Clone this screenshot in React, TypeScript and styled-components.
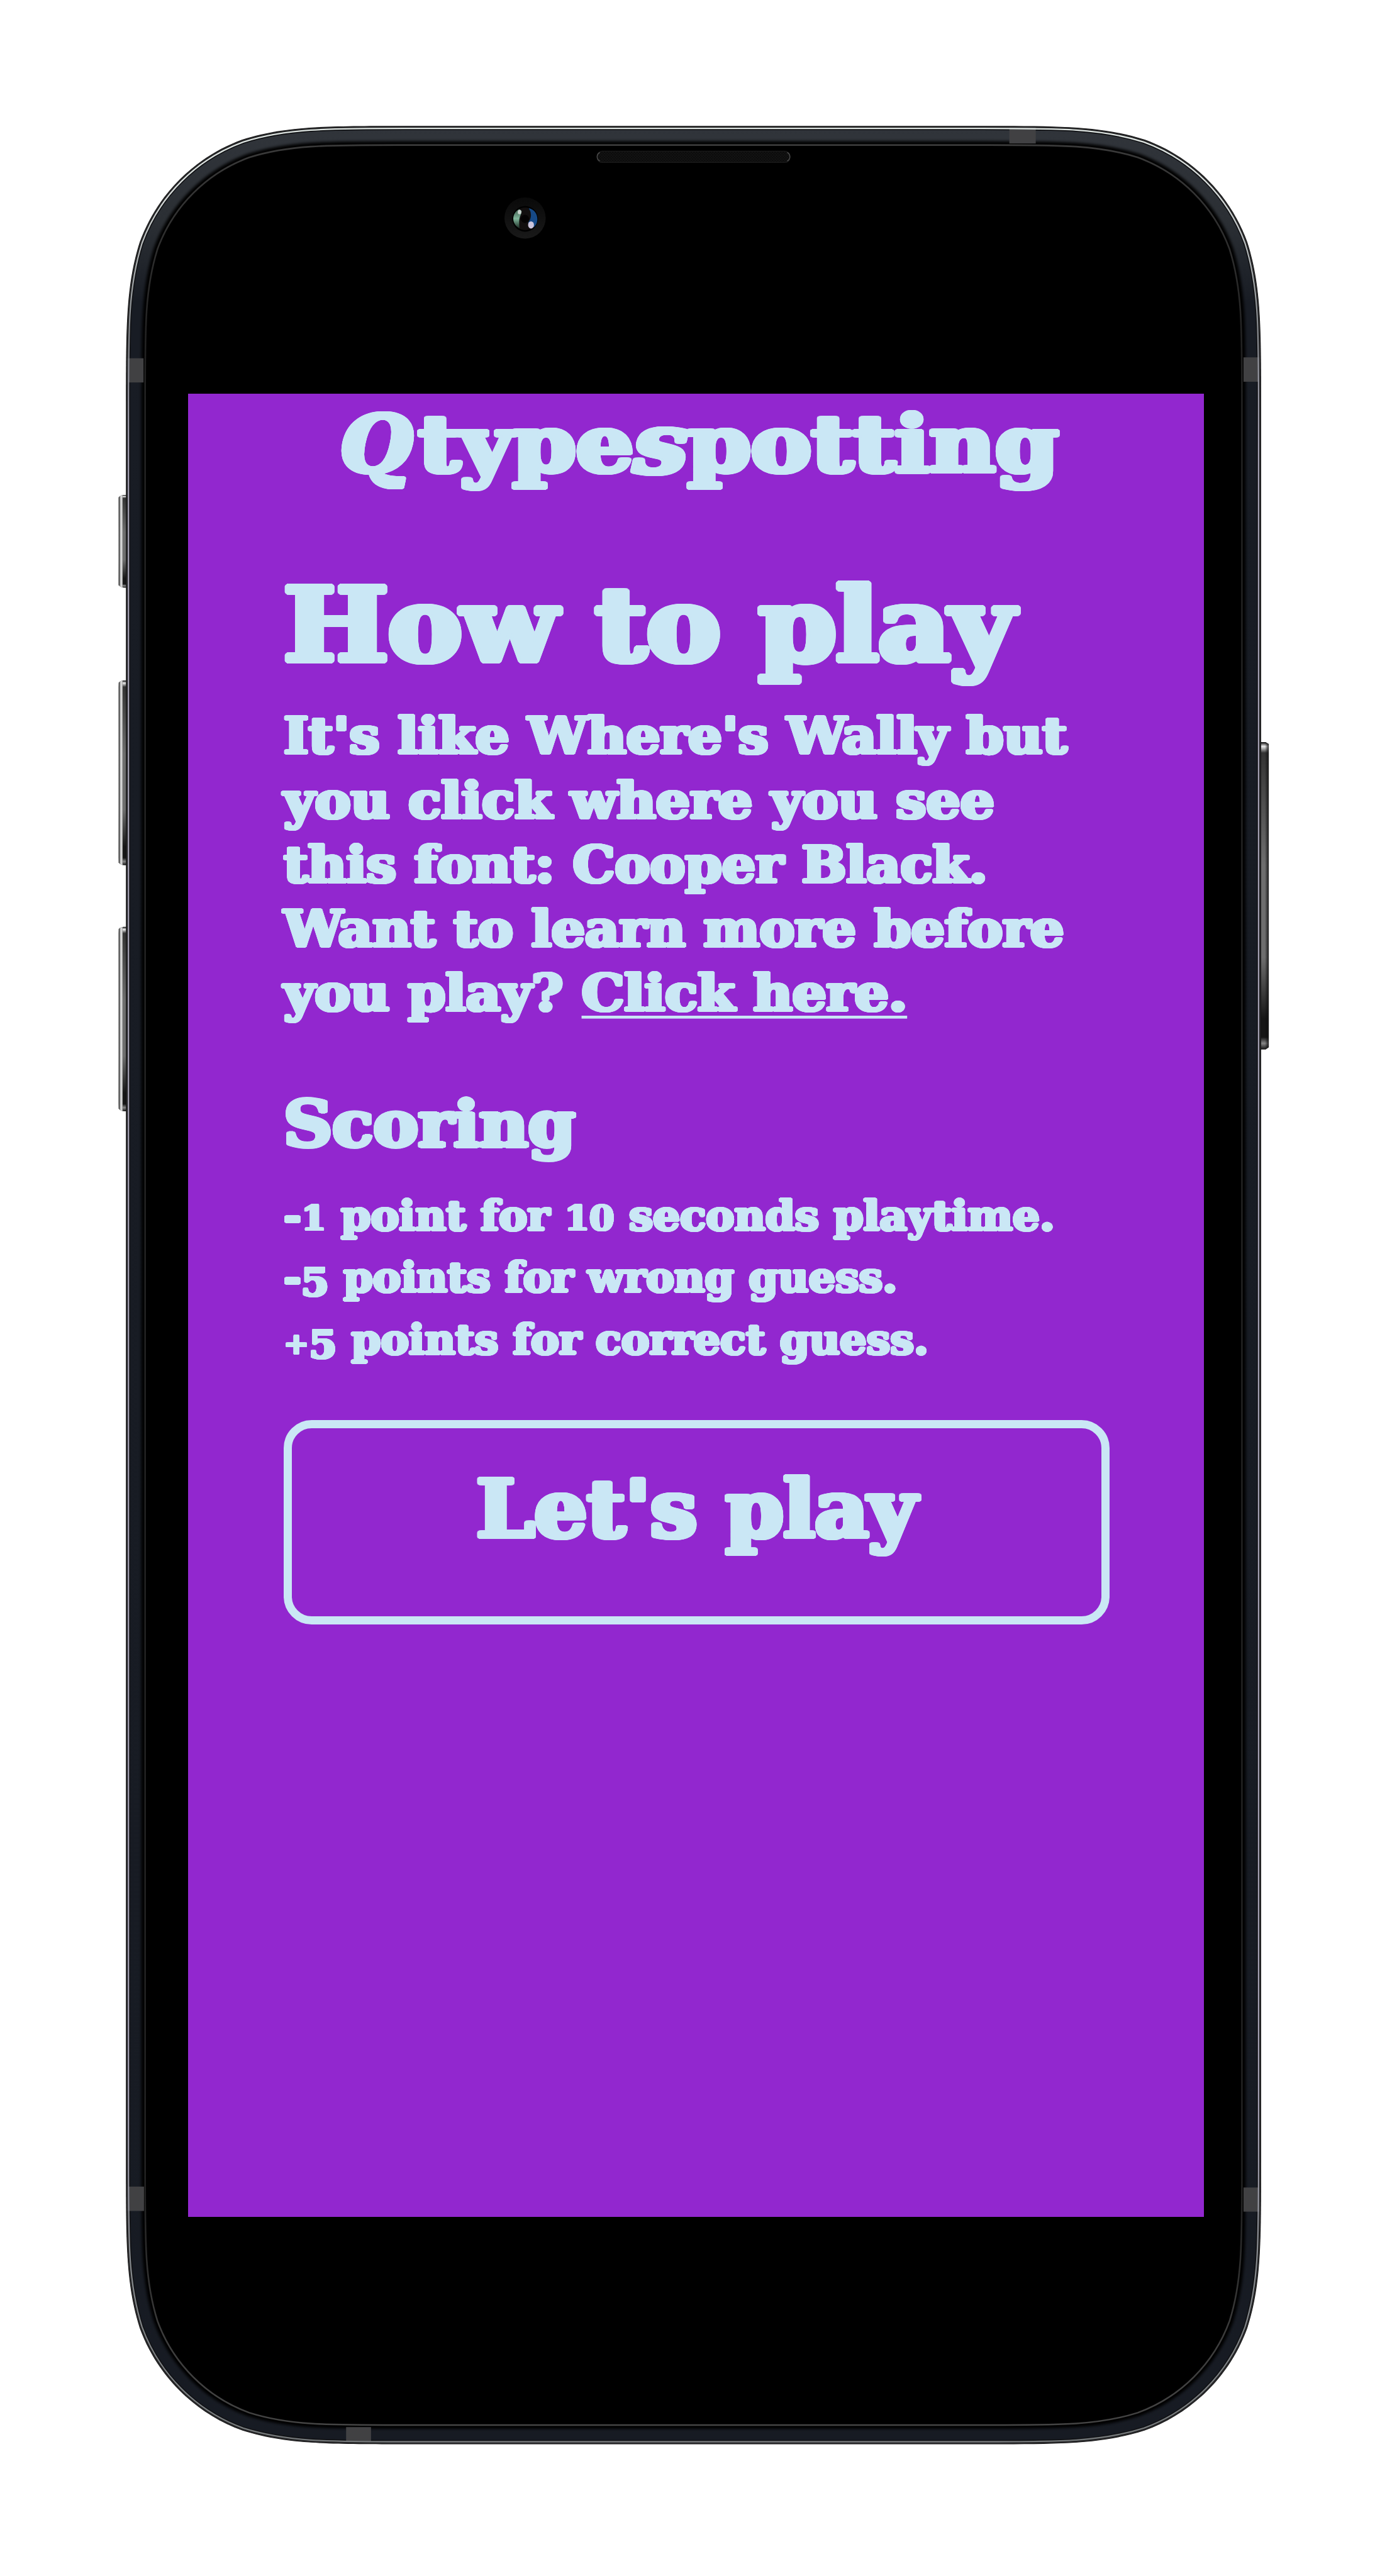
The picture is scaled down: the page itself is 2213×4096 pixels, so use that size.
import React from 'react';
import styled, { createGlobalStyle } from 'styled-components';

/* Every length is given in artboard units (3084 x 5709) and converted here. */
const SCALE = 0.7175;
const u = (n: number) => `${(n * SCALE).toFixed(2)}px`;

const INK = '#cae7f5';
const PURPLE = '#9227cf';

/* Spreads the glyph outline so that stems get fat and corners turn round. */
const plump = Array.from({ length: 24 }, (_, i) => {
  const a = (i * Math.PI) / 12;
  return `${(Math.cos(a) * 0.037).toFixed(4)}em ${(Math.sin(a) * 0.025).toFixed(4)}em 0 ${INK}`;
}).join(', ');

const GlobalStyle = createGlobalStyle`
  *, *::before, *::after { box-sizing: border-box; }
  body { margin: 0; background: #fff; }
`;

const Stage = styled.main`
  position: relative;
  width: 2213px;
  height: 4096px;
  padding: ${u(872)} 0 0 ${u(417.3)};
  overflow: hidden;
  background: #fff;
`;

const Bezel = styled.svg`
  position: absolute;
  inset: 0;
  width: 100%;
  height: 100%;
`;

const Screen = styled.div`
  position: relative;
  display: flex;
  flex-direction: column;
  width: ${u(2250)};
  height: ${u(4041)};
  background: ${PURPLE};
  color: ${INK};
  font-family: 'DejaVu Serif', serif;
  font-weight: 700;

  & * {
    text-shadow: ${plump};
  }
`;

const Logo = styled.header`
  display: flex;
  padding: ${u(11)} 0 0 ${u(337)};
  font-size: ${u(176)};
  line-height: ${u(200)};
`;

const LogoInitial = styled.span`
  width: ${u(173)};
  font-style: italic;
  transform: scaleX(1.04);
  transform-origin: 0 50%;
`;

const LogoSwash = styled.span`
  font-size: 1.06em;
  font-style: italic;
  line-height: 0;
  vertical-align: -0.015em;
`;

const Content = styled.section`
  display: flex;
  flex-direction: column;
  padding: 0 ${u(209)} 0 ${u(210.7)};
`;

const Line = styled.span<{ $stretch: number }>`
  display: block;
  width: max-content;
  white-space: pre;
  transform: scaleX(${(p) => p.$stretch});
  transform-origin: 0 50%;
`;

const Heading = styled.h1`
  margin: ${u(166.6)} 0 0;
  font-size: ${u(226)};
  line-height: ${u(271)};
`;

const Intro = styled.p`
  margin: ${u(39.4)} 0 0;
  font-size: ${u(113)};
  line-height: ${u(142.5)};
`;

const Link = styled.a`
  color: inherit;
  text-decoration: none;
  background: linear-gradient(${INK}, ${INK}) 0 ${u(117)} / 100% ${u(6.5)} no-repeat;
`;

const Subheading = styled.h2`
  margin: ${u(134.7)} 0 0;
  font-size: ${u(141)};
  line-height: ${u(170)};
`;

const Rules = styled.ul`
  margin: ${u(48)} 0 0;
  padding: 0;
  list-style: none;
  font-size: ${u(90)};
  line-height: ${u(137.3)};
`;

const Figure = styled.span<{ $size: number; $drop?: number }>`
  font-size: ${(p) => p.$size}em;
  line-height: 0;
  vertical-align: ${(p) => -(p.$drop ?? 0)}em;
`;

const PlayButton = styled.button`
  display: flex;
  justify-content: center;
  align-items: flex-start;
  width: ${u(1830)};
  height: ${u(452)};
  margin: ${u(110.6)} 0 0;
  padding: ${u(72)} 0 0;
  border: ${u(18.5)} solid ${INK};
  border-radius: ${u(62)};
  background: none;
  color: inherit;
  font: inherit;
  font-size: ${u(178)};
  line-height: ${u(214)};
`;

const PlayLabel = styled(Line)`
  transform-origin: 50% 50%;
`;

/* Continuous-curvature rounded rectangle, inset from the phone's outer edge. */
function shell(inset: number) {
  const l = 279 + inset;
  const t = 279 + inset;
  const r = 2794 - inset;
  const b = 5417 - inset;
  const k = 408 - inset;
  const corner = [
    [1.0885, 0, 0.8684, 0, 0.6315, 0.0749],
    [0.3728, 0.1691, 0.1691, 0.3728, 0.0749, 0.6315],
    [0, 0.8684, 0, 1.0885, 0, 1.5287],
  ];
  const back = [
    [0, 1.0885, 0, 0.8684, 0.0749, 0.6315],
    [0.1691, 0.3728, 0.3728, 0.1691, 0.6315, 0.0749],
    [0.8684, 0, 1.0885, 0, 1.5287, 0],
  ];
  const place = (pts: number[][], fx: (n: number) => number, fy: (n: number) => number) =>
    pts
      .map((c) => `C${fx(c[0])} ${fy(c[1])} ${fx(c[2])} ${fy(c[3])} ${fx(c[4])} ${fy(c[5])}`)
      .join('');
  const L = (n: number) => l + n * k;
  const T = (n: number) => t + n * k;
  const R = (n: number) => r - n * k;
  const B = (n: number) => b - n * k;
  return (
    `M${L(1.5287)} ${t}` + place(corner, L, T) +
    `L${l} ${B(1.5287)}` + place(back, L, B) +
    `L${R(1.5287)} ${b}` + place(corner, R, B) +
    `L${r} ${T(1.5287)}` + place(back, R, T) + 'Z'
  );
}

const sideKeys = [
  { y: 1097, h: 205.5 },
  { y: 1508, h: 409.5 },
  { y: 2054, h: 409 },
];

const antennas = [
  { x: 283, y: 794, w: 35, h: 53.6 },
  { x: 2755, y: 792, w: 35, h: 54 },
  { x: 2236.2, y: 283, w: 58.5, h: 35 },
  { x: 283, y: 4846, w: 36, h: 54 },
  { x: 2755, y: 4848, w: 35, h: 53.5 },
  { x: 766.8, y: 5379, w: 55.2, h: 33 },
];

function Phone() {
  return (
    <Bezel viewBox="0 0 3084 5709" preserveAspectRatio="none" aria-hidden="true">
      <defs>
        <linearGradient id="rim" x1="0" y1="0" x2="0" y2="1">
          <stop offset="0" stopColor="#dfe6e3" />
          <stop offset="0.03" stopColor="#d2d7d6" />
          <stop offset="0.085" stopColor="#85898d" />
          <stop offset="0.14" stopColor="#a29fb2" />
          <stop offset="0.86" stopColor="#a29fb2" />
          <stop offset="0.92" stopColor="#85898d" />
          <stop offset="1" stopColor="#74787a" />
        </linearGradient>
        <linearGradient id="band" x1="0" y1="0" x2="0" y2="1">
          <stop offset="0" stopColor="#30343a" />
          <stop offset="0.04" stopColor="#2b2f34" />
          <stop offset="0.075" stopColor="#181c24" />
          <stop offset="1" stopColor="#171b23" />
        </linearGradient>
        <linearGradient id="lip" x1="0" y1="0" x2="0" y2="1">
          <stop offset="0" stopColor="#3a3a3a" />
          <stop offset="0.09" stopColor="#212121" />
          <stop offset="0.9" stopColor="#212121" />
          <stop offset="0.96" stopColor="#3c3c3c" />
          <stop offset="1" stopColor="#444" />
        </linearGradient>
        <linearGradient id="keyLeft" x1="0" y1="0" x2="1" y2="0">
          <stop offset="0" stopColor="#222" />
          <stop offset="0.12" stopColor="#777" />
          <stop offset="0.28" stopColor="#e8e8e8" />
          <stop offset="0.42" stopColor="#aaa" />
          <stop offset="0.5" stopColor="#fff" stopOpacity="0" />
        </linearGradient>
        <linearGradient id="keyBody" x1="0" y1="0" x2="0" y2="1">
          <stop offset="0" stopColor="#000" />
          <stop offset="0.014" stopColor="#eee" />
          <stop offset="0.035" stopColor="#333" />
          <stop offset="0.4" stopColor="#6e6e6e" />
          <stop offset="0.7" stopColor="#6e6e6e" />
          <stop offset="0.9" stopColor="#161616" />
          <stop offset="0.96" stopColor="#161616" />
          <stop offset="0.98" stopColor="#888" />
          <stop offset="1" stopColor="#111" />
        </linearGradient>
        <linearGradient id="keyShade" x1="0" y1="0" x2="1" y2="0">
          <stop offset="0.6" stopColor="#000" stopOpacity="0" />
          <stop offset="1" stopColor="#1c1c1c" stopOpacity="0.9" />
        </linearGradient>
        <linearGradient id="ring" x1="0" y1="0" x2="0" y2="1">
          <stop offset="0" stopColor="#090909" />
          <stop offset="1" stopColor="#191919" />
        </linearGradient>
        <linearGradient id="green" x1="0" y1="0" x2="0" y2="1">
          <stop offset="0" stopColor="#3d5a4c" />
          <stop offset="0.5" stopColor="#7fb59a" />
          <stop offset="1" stopColor="#1d2e26" />
        </linearGradient>
        <pattern id="mesh" width="6" height="6" patternUnits="userSpaceOnUse">
          <rect width="6" height="6" fill="#131313" />
          <circle cx="1.5" cy="1.5" r="1.4" fill="#070707" />
          <circle cx="4.5" cy="4.5" r="1.4" fill="#070707" />
        </pattern>
        <filter id="soft" x="-5%" y="-5%" width="110%" height="110%">
          <feGaussianBlur stdDeviation="3" />
        </filter>
        <filter id="glint" x="-50%" y="-50%" width="200%" height="200%">
          <feGaussianBlur stdDeviation="0.9" />
        </filter>
      </defs>

      {sideKeys.map((k) => {
        const d = `M282 ${k.y}H274Q267 ${k.y} 263 ${k.y + 5}V${k.y + k.h - 6}Q268 ${k.y + k.h} 276 ${k.y + k.h}H282Z`;
        return (
          <g key={k.y}>
            <path d={d} fill="url(#keyBody)" />
            <path d={d} fill="url(#keyLeft)" />
          </g>
        );
      })}
      <path d="M2790 1644.6H2804L2811 1649V2321L2804 2326H2790Z" fill="url(#keyBody)" />
      <path d="M2790 1644.6H2804L2811 1649V2321L2804 2326H2790Z" fill="url(#keyShade)" />

      <path d={shell(0)} fill="#0b0b0b" />
      <path d={shell(2)} fill="none" stroke="#2a2a2c" strokeWidth="2.4" />
      <path d={shell(8)} fill="url(#band)" stroke="#101114" strokeWidth="3" />
      <path d={shell(38)} fill="#000" stroke="#000" strokeWidth="8" filter="url(#soft)" />
      {antennas.map((a) => (
        <rect key={`${a.x}-${a.y}`} x={a.x} y={a.y} width={a.w} height={a.h} fill="#414143" />
      ))}
      <path d={shell(5.6)} fill="none" stroke="url(#rim)" strokeWidth="3.2" />
      <path d={shell(42.5)} fill="#000" stroke="url(#lip)" strokeWidth="3.6" />

      <rect x="1323" y="335" width="427" height="25" rx="11" fill="url(#mesh)" stroke="#191919" strokeWidth="2" />
      <path d="M1329 338Q1323 341 1323 347.5Q1323 354 1329 357" fill="none" stroke="#4a4a4a" strokeWidth="2" />
      <path d="M1744 338Q1750 341 1750 347.5Q1750 354 1744 357" fill="none" stroke="#4a4a4a" strokeWidth="2" />

      <circle cx="1163.3" cy="483.3" r="45.7" fill="url(#ring)" />
      <circle cx="1163.5" cy="485" r="28.5" fill="#000" />
      <circle cx="1163.5" cy="485" r="25" fill="#120f0f" />
      <circle cx="1163" cy="485" r="9" fill="#050303" />
      <path d="M1150 505.5C1133 496 1133 473 1150 463.5L1156 468Q1155 474 1152 480Q1149 488 1151 505.5Z" fill="url(#green)" filter="url(#glint)" />
      <path d="M1171.5 461.500C1193 466 1196 494 1182 504L1170 494Q1182 478 1171.5 461.5Z" fill="#144a86" filter="url(#glint)" />
      <ellipse cx="1151" cy="470" rx="4" ry="5" fill="#c6d0cb" filter="url(#glint)" />
      <ellipse cx="1176.5" cy="498.5" rx="6.5" ry="8" fill="#ccc5dc" filter="url(#glint)" />
    </Bezel>
  );
}

export default function App() {
  return (
    <>
      <GlobalStyle />
      <Stage>
        <Phone />
        <Screen>
          <Logo>
            <LogoInitial>Q</LogoInitial>
            <Line $stretch={1.14}>
              type<LogoSwash>s</LogoSwash>potting
            </Line>
          </Logo>
          <Content>
            <Heading>
              <Line $stretch={1.084}>How to play</Line>
            </Heading>
            <Intro>
              <Line $stretch={1.044}>It's like Where's Wally but</Line>
              <Line $stretch={1.053}>you click where you see</Line>
              <Line $stretch={1.034}>this font: Cooper Black.</Line>
              <Line $stretch={1.034}>Want to learn more before</Line>
              <Line $stretch={1.05}>
                you play? <Link href="#learn">Click here.</Link>
              </Line>
            </Intro>
            <Subheading>
              <Line $stretch={1.058}>Scoring</Line>
            </Subheading>
            <Rules>
              <li>
                <Line $stretch={1.047}>
                  -<Figure $size={0.84}>1</Figure> point for <Figure $size={0.84}>10</Figure> seconds playtime.
                </Line>
              </li>
              <li>
                <Line $stretch={1.034}>
                  -<Figure $size={0.95} $drop={0.1}>5</Figure> points for wrong guess.
                </Line>
              </li>
              <li>
                <Line $stretch={1.034}>
                  <Figure $size={0.72}>+</Figure>
                  <Figure $size={0.95} $drop={0.1}>5</Figure> points for correct guess.
                </Line>
              </li>
            </Rules>
            <PlayButton type="button">
              <PlayLabel $stretch={1.028}>Let's play</PlayLabel>
            </PlayButton>
          </Content>
        </Screen>
      </Stage>
    </>
  );
}
